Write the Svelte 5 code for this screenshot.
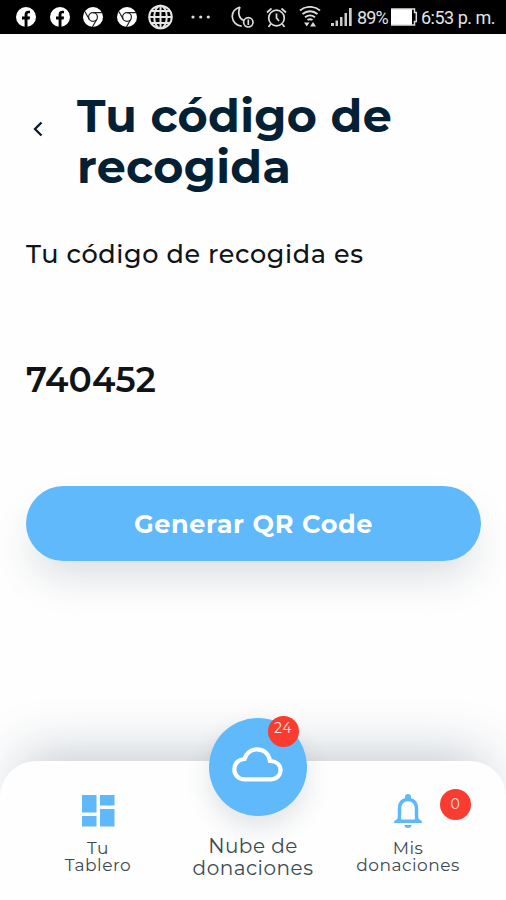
<script>
  let pickupCode = '740452';
  let cloudCount = 24;
  let donationCount = 0;
</script>

<div class="screen">
  <div class="status-bar">
    <div class="notifications">
      {#each [1, 2] as n (n)}
        <svg width="20" height="20" viewBox="0 0 20 20">
          <circle cx="10" cy="10" r="10" fill="#fff" />
          <path d="M8.6 20v-7.4H6V9.4h2.6V7.6C8.6 5 10 3.7 12.3 3.7c.9 0 1.7.1 1.7.1v2.5h-1.2c-1 0-1.3.6-1.3 1.3v1.8h2.6l-.5 3.2h-2.1V20z" fill="#000" />
        </svg>
      {/each}
      {#each [1, 2] as n (n)}
        <svg width="20" height="20" viewBox="0 0 20 20">
          <circle cx="10" cy="10" r="10" fill="#fff" />
          <g fill="none" stroke="#222" stroke-width="1.2">
            <circle cx="10" cy="10" r="4.4" />
            <path d="M10 5.6h9M6.2 12.2 2 4.7M13.8 12.2 9.4 20" />
          </g>
        </svg>
      {/each}
      <svg class="globe" width="25" height="26" viewBox="0 0 25 26">
        <g fill="none" stroke="#e6e6e6" stroke-width="2">
          <circle cx="12.5" cy="13" r="11.3" />
          <ellipse cx="12.5" cy="13" rx="6.3" ry="11.3" />
          <path d="M12.5 1.7v22.6M1.2 13h22.6M3.2 7h18.6M3.2 19h18.6" />
        </g>
      </svg>
      <svg class="more" width="20" height="4" viewBox="0 0 20 4" fill="#ddd">
        <circle cx="2" cy="2" r="1.6" />
        <circle cx="9.7" cy="2" r="1.6" />
        <circle cx="17.3" cy="2" r="1.6" />
      </svg>
    </div>

    <div class="system">
      <svg width="24" height="24" viewBox="0 0 24 24" fill="none" stroke="#ddd" stroke-width="1.7">
        <path d="M9 2C3 4 1 8 1.3 12c.4 5 4.4 9 9.4 9.2M9 2C6.5 8 8 14 13 15.5" />
        <circle cx="17.3" cy="17.3" r="4.7" />
        <path d="M17.3 14.5v5.5" />
      </svg>
      <svg class="alarm" width="21" height="21" viewBox="0 0 21 21" fill="none" stroke="#ddd" stroke-width="1.7">
        <circle cx="10.5" cy="11" r="7.8" />
        <path d="M10.5 6.5V11l2.5 3M1 5.5 5.5 1.5M20 5.5 15.5 1.5M4.7 17 2.5 20M16.3 17l2.2 3" />
      </svg>
      <svg class="wifi" width="22" height="22" viewBox="0 0 22 22" fill="none" stroke="#ddd" stroke-width="1.9">
        <path d="M1 4.5C6.5-.3 15.5-.3 21 4.5M3.5 8C8 4.3 14 4.3 18.5 8M6 11.2c3-2.2 7-2.2 10 0M8.5 14c1.5-1 3.5-1 5 0" />
        <path d="M5 16.5h5.500l-2.700 4zM11 20.500l3-4.500 3 4.500z" fill="#ddd" stroke="none" />
      </svg>
      <svg class="signal" width="22" height="20" viewBox="0 0 22 20" fill="#ccc">
        <path d="M0 16h3v3H0zM4.5 13.5h2.500V19H4.500zM9 10h2.500v9H9zM13.500 6H16v13h-2.500zM18 1h2.700v18H18z" />
      </svg>
      <span class="battery-level">89%</span>
      <svg class="battery" width="27" height="18" viewBox="0 0 27 18">
        <path d="M0 1h21v16H0z" fill="#fff" />
        <path d="M0 1h23.500v3.500h1.800v9h-1.800V17H0" fill="none" stroke="#ddd" stroke-width="1.5" />
      </svg>
      <span class="clock">6:53 p. m.</span>
    </div>
  </div>

  <main>
    <header>
      <button class="back" aria-label="Volver">
        <svg width="12" height="16" viewBox="0 0 12 16" fill="none" stroke="#0b1a26" stroke-width="2.3">
          <path d="M9.5 1.5 3 8l6.5 6.5" />
        </svg>
      </button>
      <h1>Tu código de<br />recogida</h1>
    </header>

    <p class="subtitle">Tu código de recogida es</p>
    <p class="code">{pickupCode}</p>
    <button class="generate">Generar QR Code</button>
  </main>

  <nav>
    <div class="tab board">
      <svg width="33" height="32" viewBox="0 0 33 32" fill="#5fb8f9">
        <path d="M0 0h14.500v17.500H0zM0 21h14.500v10.500H0zM18 0h14.500v10.500H18zM18 14h14.500v17.500H18z" />
      </svg>
      <span>Tu<br />Tablero</span>
    </div>

    <div class="tab cloud">
      <div class="bubble">
        <svg width="51" height="35" viewBox="0 0 51 35" fill="none" stroke="#fff" stroke-width="4.2">
          <path d="M12.500 32.300C6.500 32.300 2.300 28 2.300 22.200c0-5.400 4-9.700 10.200-10.200C14.500 6 19 2.300 25 2.300c7 0 12 4.700 13 11.700 6.500.3 10.600 4 10.600 9 0 5.200-4 9.300-9.300 9.300z" />
        </svg>
        <span class="badge count">{cloudCount}</span>
      </div>
      <span>Nube de<br />donaciones</span>
    </div>

    <div class="tab bell">
      <div class="bell-icon">
        <svg width="28" height="34" viewBox="0 0 28 34">
          <path d="M5.500 26V15C5.500 8.500 9 5.500 14 5.500s8.500 3 8.500 9.500v11" fill="none" stroke="#5fb8f9" stroke-width="3.5" />
          <path d="M0 29v-1.500l3.800-3.200h20.400l3.800 3.200V29zM11 5V3a3 3 0 0 1 6 0v2zM10.500 31h7a3.500 3 0 0 1-7 0z" fill="#5fb8f9" />
          <path d="M7.200 22h13.600v3.500H7.200z" fill="#fefefe" />
        </svg>
        <span class="badge">{donationCount}</span>
      </div>
      <span>Mis<br />donaciones</span>
    </div>
  </nav>
</div>

<style>
  :global(body) {
    background: #fefefe;
  }

  .screen {
    height: 900px;
    display: flex;
    flex-direction: column;
    overflow: hidden;
    font-family: Montserrat, Inter, sans-serif;
    color: #111416;
  }

  svg {
    display: block;
    flex: none;
  }

  button {
    border: none;
    padding: 0;
    font: inherit;
    cursor: pointer;
  }

  p,
  h1 {
    margin: 0;
    white-space: nowrap;
  }

  .status-bar {
    box-sizing: border-box;
    height: 34px;
    padding: 0 10px 0 16px;
    display: flex;
    align-items: center;
    justify-content: space-between;
    background: #000;
    color: #e4e4e4;
    font: 400 18px Roboto, sans-serif;
  }

  .notifications,
  .system {
    display: flex;
    align-items: center;
  }

  .notifications {
    gap: 13.7px;
  }

  .globe {
    margin-left: -3px;
  }

  .more {
    margin-left: 5px;
  }

  .alarm {
    margin-left: 11px;
  }

  .wifi {
    margin-left: 12px;
  }

  .signal {
    margin: 0 4px 0 10px;
  }

  .battery-level {
    width: 34px;
    letter-spacing: -0.9px;
  }

  .battery {
    margin-right: 3px;
  }

  .clock {
    width: 75px;
    white-space: nowrap;
    letter-spacing: -0.5px;
  }

  main {
    flex: 1;
    padding: 56px 25px 0 26px;
    display: flex;
    flex-direction: column;
  }

  header {
    display: flex;
    align-items: flex-start;
  }

  .back {
    width: 51px;
    padding: 31px 0 0 6px;
    background: none;
  }

  h1 {
    font-size: 46px;
    line-height: 51px;
    font-weight: 700;
    letter-spacing: 0.3px;
    color: #042035;
  }

  .subtitle {
    margin-top: 46px;
    font-size: 25.5px;
    line-height: 32px;
    font-weight: 500;
    letter-spacing: 0.6px;
  }

  .code {
    margin-top: 90px;
    font-size: 34.5px;
    line-height: 40px;
    font-weight: 600;
    letter-spacing: 0.2px;
  }

  .generate {
    height: 75px;
    margin-top: 86px;
    border-radius: 38px;
    background: #5fb9fb;
    color: #fff;
    font-size: 25.5px;
    font-weight: 700;
    letter-spacing: 0.65px;
    box-shadow: 0 22px 40px -6px rgba(20, 45, 60, 0.15);
  }

  nav {
    height: 139px;
    display: flex;
    justify-content: space-between;
    border-radius: 36px 36px 0 0;
    background: #fefefe;
    box-shadow: 0 -26px 54px -20px rgba(20, 45, 75, 0.26);
    color: #3b4a52;
    text-align: center;
  }

  .tab {
    display: flex;
    flex-direction: column;
    align-items: center;
    font-size: 17px;
    line-height: 17px;
    font-weight: 400;
    letter-spacing: 0.5px;
    white-space: nowrap;
  }

  .board {
    width: 196px;
    padding-top: 34px;
    gap: 13px;
  }

  .cloud {
    width: 114px;
    font-size: 20px;
    line-height: 22px;
    gap: 19px;
  }

  .bubble {
    position: relative;
    width: 98px;
    height: 98px;
    margin: -43px 0 0 9px;
    display: flex;
    align-items: center;
    justify-content: center;
    border-radius: 50%;
    background: #5fb9fb;
    box-shadow: 0 12px 26px rgba(20, 45, 60, 0.13);
  }

  .bubble svg {
    margin-top: -6px;
  }

  .bell {
    width: 196px;
    padding-top: 33px;
    gap: 12px;
  }

  .bell-icon {
    position: relative;
  }

  .badge {
    position: absolute;
    top: -5px;
    left: 46px;
    width: 31px;
    height: 31px;
    border-radius: 50%;
    background: #f93c30;
    color: #ffe3e0;
    font-size: 14px;
    line-height: 31px;
    font-weight: 400;
  }

  .badge.count {
    top: -2px;
    left: 59px;
    line-height: 24px;
  }
</style>
